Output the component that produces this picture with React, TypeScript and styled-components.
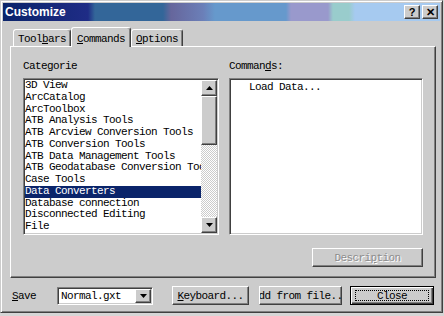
import styled, { createGlobalStyle, css } from "styled-components";

const face = "#cccccc";
const mono = `"Liberation Mono", "DejaVu Sans Mono", monospace`;

const GlobalStyle = createGlobalStyle`
  html, body {
    margin: 0;
    padding: 0;
    background: #d6d6d6;
  }
  * {
    box-sizing: border-box;
  }
`;

const raised = css`
  border: 1px solid;
  border-color: #ffffff #404040 #404040 #ffffff;
  box-shadow: inset -1px -1px #808080, inset 1px 1px ${face};
`;

const sunken = css`
  border: 1px solid;
  border-color: #808080 #ffffff #ffffff #808080;
  box-shadow: inset 1px 1px #404040, inset -1px -1px ${face};
`;

const Window = styled.div`
  width: 443px;
  height: 313px;
  background: ${face};
  border: 1px solid;
  border-color: ${face} #404040 #404040 ${face};
  box-shadow: inset 1px 1px #ffffff, inset -1px -1px #808080;
  padding: 2px;
  display: flex;
  flex-direction: column;
  font-family: ${mono};
  font-size: 11px;
  letter-spacing: -0.6px;
  color: #000;
`;

const TitleBar = styled.div`
  height: 18px;
  display: flex;
  align-items: center;
  padding: 0 2px 0 2px;
  background: linear-gradient(
    90deg,
    #0a246a 0px,
    #1f2c86 85px,
    #336699 92px,
    #336699 160px,
    #66669c 168px,
    #6b7fb8 200px,
    #6699cc 212px,
    #6699cc 283px,
    #9999cc 288px,
    #9999cc 325px,
    #99cccc 330px,
    #99cccc 346px,
    #a6caf0 352px
  );
`;

const Title = styled.div`
  flex: 1;
  color: #ffffff;
  font-family: "Liberation Sans", Arial, sans-serif;
  font-weight: bold;
  font-size: 12px;
  letter-spacing: 0;
`;

const CapButton = styled.div`
  ${raised};
  width: 16px;
  height: 14px;
  margin-left: 2px;
  background: ${face};
  display: flex;
  align-items: center;
  justify-content: center;
  font-family: "Liberation Sans", Arial, sans-serif;
  font-weight: bold;
  font-size: 11px;
  letter-spacing: 0;
  line-height: 1;
`;

const Body = styled.div`
  flex: 1;
  display: flex;
  flex-direction: column;
  padding: 6px 4px 0 7px;
`;

const Tabs = styled.div`
  display: flex;
  align-items: flex-end;
  height: 19px;
  padding-left: 3px;
`;

const Tab = styled.div<{ $active?: boolean; $w: number }>`
  position: relative;
  width: ${({ $w }) => $w}px;
  height: ${({ $active }) => ($active ? 20 : 17)}px;
  margin-bottom: ${({ $active }) => ($active ? -1 : 0)}px;
  z-index: ${({ $active }) => ($active ? 1 : 0)};
  background: ${face};
  border: 1px solid;
  border-bottom: none;
  border-color: #ffffff #404040 transparent #ffffff;
  border-radius: 3px 3px 0 0;
  box-shadow: inset -1px 0 #808080;
  display: flex;
  align-items: center;
  justify-content: center;
  padding-top: 2px;
`;

const Panel = styled.div`
  ${raised};
  background: ${face};
  padding: 13px 12px 10px 12px;
  display: flex;
  flex-direction: column;
`;

const Columns = styled.div`
  display: grid;
  grid-template-columns: 196px 194px;
  column-gap: 10px;
`;

const Label = styled.div`
  height: 12px;
  line-height: 12px;
  margin-bottom: 6px;
  white-space: nowrap;
`;

const ListBox = styled.div`
  ${sunken};
  height: 157px;
  padding: 1px;
  background: #ffffff;
  display: flex;
`;

const Items = styled.div`
  flex: 1;
  overflow: hidden;
  display: flex;
  flex-direction: column;
`;

const Item = styled.div<{ $selected?: boolean }>`
  height: 11.75px;
  line-height: 11.75px;
  flex-shrink: 0;
  white-space: nowrap;
  background: ${({ $selected }) => ($selected ? "#0a246a" : "transparent")};
  color: ${({ $selected }) => ($selected ? "#ffffff" : "#000000")};
`;

const ScrollBar = styled.div`
  width: 16px;
  display: flex;
  flex-direction: column;
`;

const ArrowButton = styled.div`
  ${raised};
  width: 16px;
  height: 16px;
  flex-shrink: 0;
  background: ${face};
  display: flex;
  align-items: center;
  justify-content: center;
`;

const Thumb = styled.div`
  ${raised};
  height: 49px;
  flex-shrink: 0;
  background: ${face};
`;

const Track = styled.div`
  flex: 1;
  background: repeating-conic-gradient(#ffffff 0 25%, ${face} 0 50%) 0 0 / 2px
    2px;
`;

const CommandBox = styled.div`
  ${sunken};
  height: 157px;
  background: #ffffff;
  padding: 2px 0 0 19px;
  line-height: 12px;
`;

const PanelFooter = styled.div`
  display: flex;
  justify-content: flex-end;
  margin-top: 13px;
`;

const Button = styled.div<{ $w: number; $gap?: number; $disabled?: boolean }>`
  ${raised};
  position: relative;
  width: ${({ $w }) => $w}px;
  height: 19px;
  margin-left: ${({ $gap }) => $gap ?? 0}px;
  background: ${face};
  display: flex;
  align-items: center;
  justify-content: center;
  white-space: nowrap;
  overflow: hidden;
  color: ${({ $disabled }) => ($disabled ? "#8c8c8c" : "#000000")};
  text-shadow: ${({ $disabled }) => ($disabled ? "1px 1px #ffffff" : "none")};
`;

const DefaultButton = styled(Button)`
  border: 1px solid #000000;
  box-shadow: inset 1px 1px #ffffff, inset -1px -1px #404040,
    inset -2px -2px #808080;

  &::after {
    content: "";
    position: absolute;
    inset: 3px 4px;
    border: 1px dotted #000000;
  }
`;

const BottomRow = styled.div`
  display: flex;
  align-items: center;
  margin-top: 8px;
  height: 19px;
`;

const SaveLabel = styled.div`
  width: 47px;
  padding-left: 2px;
`;

const Combo = styled.div`
  ${sunken};
  width: 96px;
  height: 18px;
  padding: 1px;
  background: #ffffff;
  display: flex;
`;

const ComboText = styled.div`
  flex: 1;
  padding-left: 2px;
  line-height: 14px;
`;

const ComboArrow = styled(ArrowButton)`
  height: 14px;
`;

const Arrow = ({ down }: { down?: boolean }) => (
  <svg width="7" height="4" viewBox="0 0 7 4">
    <polygon
      points={down ? "0,0 7,0 3.5,4" : "3.5,0 7,4 0,4"}
      fill="#000000"
    />
  </svg>
);

const categories = [
  "3D View",
  "ArcCatalog",
  "ArcToolbox",
  "ATB Analysis Tools",
  "ATB Arcview Conversion Tools",
  "ATB Conversion Tools",
  "ATB Data Management Tools",
  "ATB Geodatabase Conversion Tools",
  "Case Tools",
  "Data Converters",
  "Database connection",
  "Disconnected Editing",
  "File",
];

export default function App() {
  return (
    <>
      <GlobalStyle />
      <Window>
        <TitleBar>
          <Title>Customize</Title>
          <CapButton>?</CapButton>
          <CapButton>✕</CapButton>
        </TitleBar>
        <Body>
          <Tabs>
            <Tab $w={58}>
              <span>
                Tool<u>b</u>ars
              </span>
            </Tab>
            <Tab $w={60} $active>
              <span>
                <u>C</u>ommands
              </span>
            </Tab>
            <Tab $w={52}>
              <span>
                <u>O</u>ptions
              </span>
            </Tab>
          </Tabs>
          <Panel>
            <Columns>
              <div>
                <Label>Categorie</Label>
                <ListBox>
                  <Items>
                    {categories.map((c) => (
                      <Item key={c} $selected={c === "Data Converters"}>
                        {c}
                      </Item>
                    ))}
                  </Items>
                  <ScrollBar>
                    <ArrowButton>
                      <Arrow />
                    </ArrowButton>
                    <Thumb />
                    <Track />
                    <ArrowButton>
                      <Arrow down />
                    </ArrowButton>
                  </ScrollBar>
                </ListBox>
              </div>
              <div>
                <Label>
                  Comman<u>d</u>s:
                </Label>
                <CommandBox>Load Data...</CommandBox>
              </div>
            </Columns>
            <PanelFooter>
              <Button $w={111} $disabled>
                <span>
                  Descri<u>p</u>tion
                </span>
              </Button>
            </PanelFooter>
          </Panel>
          <BottomRow>
            <SaveLabel>
              <u>S</u>ave
            </SaveLabel>
            <Combo>
              <ComboText>Normal.gxt</ComboText>
              <ComboArrow>
                <Arrow down />
              </ComboArrow>
            </Combo>
            <Button $w={77} $gap={19}>
              <span>
                <u>K</u>eyboard...
              </span>
            </Button>
            <Button $w={83} $gap={10}>
              dd from file..
            </Button>
            <DefaultButton $w={84} $gap={8}>
              Close
            </DefaultButton>
          </BottomRow>
        </Body>
      </Window>
    </>
  );
}
